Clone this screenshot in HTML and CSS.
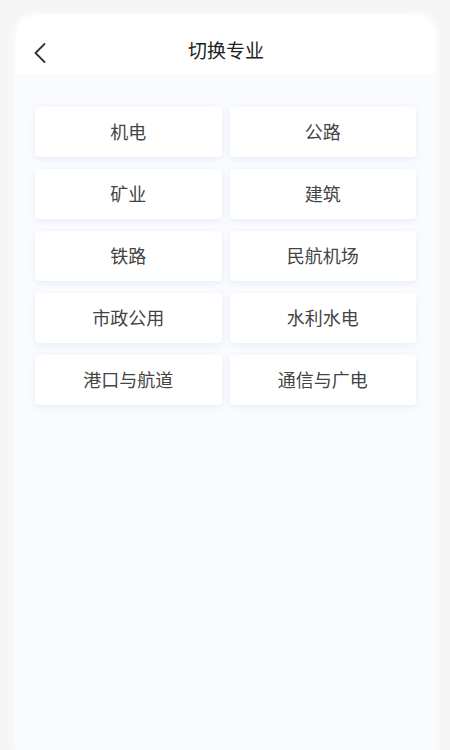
FILE: index.html
```html
<!DOCTYPE html>
<html lang="zh-CN">
<head>
<meta charset="utf-8">
<title>切换专业</title>
<link rel="stylesheet" href="styles.css">
</head>
<body>
<div class="card">
  <header class="header">
    <svg class="back" width="14" height="22" viewBox="0 0 14 22" aria-hidden="true">
      <path d="M11.5 2 L2.5 11 L11.5 20" fill="none" stroke="#333" stroke-width="1.8" stroke-linecap="round" stroke-linejoin="round"/>
    </svg>
    <h1 class="title">切换专业</h1>
  </header>
  <main class="content">
    <div class="grid">
      <div class="item">机电</div>
      <div class="item">公路</div>
      <div class="item">矿业</div>
      <div class="item">建筑</div>
      <div class="item">铁路</div>
      <div class="item">民航机场</div>
      <div class="item">市政公用</div>
      <div class="item">水利水电</div>
      <div class="item">港口与航道</div>
      <div class="item">通信与广电</div>
    </div>
  </main>
</div>
</body>
</html>
```

FILE: styles.css
```css
html, body {
  margin: 0;
  padding: 0;
  height: 100%;
  overflow: hidden;
}
body {
  background: #f5f5f5;
  font-family: "Noto Sans CJK SC", "Noto Sans", sans-serif;
  display: flex;
  flex-direction: column;
  padding: 15px 14px 0 16px;
  box-sizing: border-box;
}
.card {
  flex: 1;
  display: flex;
  flex-direction: column;
  background: #f9fbfe;
  border-radius: 20px 20px 0 0;
  overflow: hidden;
  box-shadow: 0 0 0 3px #fafafa, 0 0 8px 4px #f9f9f9;
}
.header {
  position: relative;
  height: 59px;
  background: #ffffff;
  display: flex;
  align-items: flex-start;
  justify-content: center;
  box-sizing: border-box;
}
.back {
  position: absolute;
  left: 17px;
  top: 27px;
}
.title {
  margin: 23px 0 0;
  font-size: 19px;
  font-weight: 400;
  color: #222;
  line-height: 24px;
}
.content {
  flex: 1;
  padding: 33px 20px 0 19px;
}
.grid {
  display: grid;
  grid-template-columns: 1fr 1fr;
  column-gap: 8px;
  row-gap: 12px;
}
.item {
  height: 50px;
  box-sizing: border-box;
  padding-bottom: 3px;
  background: #ffffff;
  border-radius: 4px;
  box-shadow: 0 2px 6px rgba(200, 212, 235, 0.35);
  display: flex;
  align-items: center;
  justify-content: center;
  font-size: 18px;
  color: #444;
}
```
